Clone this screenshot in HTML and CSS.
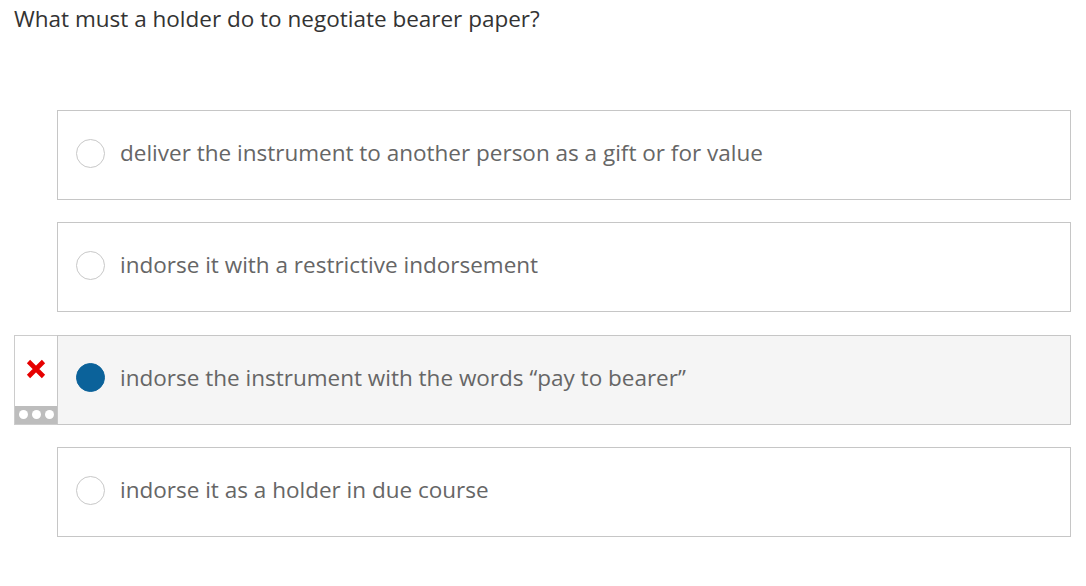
FILE: index.html
```html
<!DOCTYPE html>
<html>
<head>
<meta charset="utf-8">
<link rel="stylesheet" href="styles.css">
</head>
<body>
<div class="page">
  <div class="question">What must a holder do to negotiate bearer paper?</div>
  <div class="options">
    <div class="row">
      <div class="feedback-slot"></div>
      <div class="option">
        <span class="radio"></span>
        <span class="label">deliver the instrument to another person as a gift or for value</span>
      </div>
    </div>
    <div class="row">
      <div class="feedback-slot"></div>
      <div class="option">
        <span class="radio"></span>
        <span class="label">indorse it with a restrictive indorsement</span>
      </div>
    </div>
    <div class="row">
      <div class="feedback-slot">
        <div class="feedback">
          <div class="mark">
            <svg width="20" height="20" viewBox="0 0 20 20"><path d="M2.5 2.5 L17.5 17.5 M17.5 2.5 L2.5 17.5" stroke="#e60000" stroke-width="4.6" stroke-linecap="butt"/></svg>
          </div>
          <div class="more"><span class="dot"></span><span class="dot"></span><span class="dot"></span></div>
        </div>
      </div>
      <div class="option selected">
        <span class="radio"></span>
        <span class="label">indorse the instrument with the words “pay to bearer”</span>
      </div>
    </div>
    <div class="row">
      <div class="feedback-slot"></div>
      <div class="option">
        <span class="radio"></span>
        <span class="label">indorse it as a holder in due course</span>
      </div>
    </div>
  </div>
</div>
</body>
</html>
```
FILE: styles.css
```css
html, body {
  margin: 0;
  padding: 0;
  background: #ffffff;
}
body {
  font-family: "Open Sans", "Liberation Sans", sans-serif;
}
.page {
  width: 1086px;
}
.question {
  padding: 3px 14px 0 14px;
  font-size: 22.5px;
  line-height: 32px;
  color: #333333;
}
.options {
  margin-top: 75px;
  padding: 0 15px 0 14px;
  display: flex;
  flex-direction: column;
  gap: 22.4px;
}
.row {
  display: flex;
}
.feedback-slot {
  width: 43px;
  flex: none;
}
.feedback {
  height: 90px;
  box-sizing: border-box;
  border: 1px solid #cccccc;
  border-right: none;
  display: flex;
  flex-direction: column;
}
.mark {
  flex: 1;
  display: flex;
  justify-content: center;
  align-items: center;
  padding-bottom: 4px;
}
.more {
  height: 18px;
  background: #bdbdbd;
  display: flex;
  justify-content: center;
  align-items: center;
  gap: 4px;
}
.dot {
  width: 9px;
  height: 9px;
  border-radius: 50%;
  background: #ffffff;
}
.option {
  flex: 1;
  height: 90px;
  box-sizing: border-box;
  border: 1px solid #c6c6c6;
  background: #ffffff;
  display: flex;
  align-items: center;
  padding-left: 18px;
  padding-bottom: 4px;
  gap: 15px;
}
.option.selected {
  background: #f5f5f5;
}
.radio {
  width: 29px;
  height: 29px;
  box-sizing: border-box;
  border-radius: 50%;
  border: 1px solid #c8c8c8;
  background: #ffffff;
  flex: none;
}
.option.selected .radio {
  background: #0b629a;
  border-color: #0b629a;
}
.label {
  font-size: 22.5px;
  color: #666666;
  line-height: 30px;
}
```
